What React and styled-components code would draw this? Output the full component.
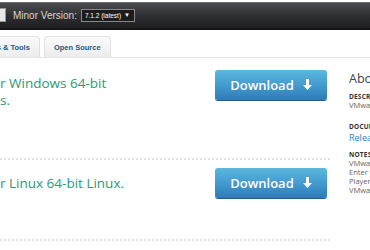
import styled, { createGlobalStyle } from "styled-components";

const GlobalStyle = createGlobalStyle`
	html, body {
		margin: 0;
		padding: 0;
		background: #fff;
		overflow: hidden;
		font-family: "Open Sans", "Liberation Sans", sans-serif;
	}
`;

const Page = styled.div`
	width: 370px;
	height: 250px;
	overflow: hidden;
	background: #fff;
`;

const TopBar = styled.div`
	margin-top: 2px;
	height: 28px;
	box-sizing: border-box;
	border-top: 1px solid #6a6a6a;
	border-bottom: 2px solid #161616;
	background: linear-gradient(#4b4c50, #2c2d30 55%, #1f1f21);
	display: flex;
	align-items: center;
	gap: 7px;
	padding-bottom: 1px;
`;

const StubSelect = styled.div`
	width: 5px;
	height: 12px;
	background: #e8e8e8;
	border: 1px solid #999;
	border-left: none;
`;

const Label = styled.span`
	font-family: "Liberation Sans", Arial, sans-serif;
	font-size: 10px;
	color: #d8d8d8;
`;

const Select = styled.div`
	margin-left: -3px;
	width: 54px;
	height: 13px;
	box-sizing: border-box;
	border: 1px solid #888;
	background: #1c1c1c;
	color: #fff;
	font-family: "Liberation Sans", Arial, sans-serif;
	font-size: 6.5px;
	display: flex;
	align-items: center;
	justify-content: space-between;
	padding: 0 4px 0 3px;
`;

const Caret = styled.span`
	font-size: 6px;
`;

const Tabs = styled.div`
	margin-top: 6px;
	height: 22px;
	box-sizing: border-box;
	border-bottom: 1px solid #e4e4e4;
	display: flex;
	gap: 4px;
	align-items: flex-end;
`;

const Tab = styled.div`
	height: 21px;
	box-sizing: border-box;
	margin-left: ${({ $offset }) => $offset || 0}px;
	padding: 0 ${({ $pad }) => $pad || 9}px;
	border: 1px solid #e0e0e0;
	border-bottom: none;
	border-radius: 4px 4px 0 0;
	background: linear-gradient(#fbfbfb, #ececec);
	color: #23577f;
	font-family: "Liberation Sans", Arial, sans-serif;
	font-weight: 700;
	font-size: 7.5px;
	white-space: nowrap;
	display: flex;
	align-items: center;
`;

const Body = styled.div`
	display: flex;
	gap: 19px;
`;

const MainCol = styled.div`
	width: 330px;
	flex-shrink: 0;
`;

const Row = styled.div`
	height: ${({ $h }) => $h}px;
	padding-top: ${({ $top }) => $top}px;
	box-sizing: border-box;
	border-bottom: 2px dotted #e3e3e3;
	display: flex;
	justify-content: space-between;
	align-items: flex-start;
`;

const Desc = styled.div`
	font-size: 13.5px;
	line-height: 17px;
	color: #2a9a78;
	padding-top: ${({ $top }) => $top || 0}px;
`;

const Button = styled.button`
	width: 112px;
	height: 30px;
	margin-right: 3px;
	border: none;
	border-radius: 3px;
	background: linear-gradient(#5ab8de, #3f95cb 60%, #2f7ab8);
	box-shadow: 0 1px 0 #1f5f96;
	color: #fff;
	font-family: "Open Sans", sans-serif;
	font-size: 13px;
	font-weight: 600;
	display: flex;
	align-items: center;
	justify-content: center;
	gap: 9px;
	padding: 0 0 1px;
`;

const Side = styled.div`
	width: 120px;
	flex-shrink: 0;
	padding-top: 12px;
	white-space: nowrap;
`;

const SideTitle = styled.div`
	font-size: 12.5px;
	color: #444;
	margin-bottom: 5px;
`;

const SideHead = styled.div`
	font-size: 6.5px;
	font-weight: 700;
	color: #333;
	letter-spacing: 0.2px;
	margin-top: ${({ $top }) => $top || 0}px;
`;

const SideText = styled.div`
	line-height: 8.7px;
	color: ${({ $link }) => ($link ? "#2f81bd" : "#666")};
	font-size: ${({ $link }) => ($link ? 9 : 7.5)}px;
	margin-top: ${({ $link }) => ($link ? 3 : 0)}px;
`;

const ArrowDown = () => (
	<svg width="9" height="11" viewBox="0 0 9 11">
		<path d="M3 0h3v6h3L4.5 11 0 6h3z" fill="#fff" />
	</svg>
);

const App = () => {
	return (
		<>
			<GlobalStyle />
			<Page>
				<TopBar>
					<StubSelect />
					<Label>Minor Version:</Label>
					<Select>
						<span>7.1.2 (latest)</span>
						<Caret>▼</Caret>
					</Select>
				</TopBar>
				<Tabs>
					<Tab $offset={-35} $pad={9}>Drivers &amp; Tools</Tab>
					<Tab>Open Source</Tab>
				</Tabs>
				<Body>
					<MainCol>
						<Row $h={102} $top={12}>
							<Desc $top={5}>
								r Windows 64-bit
								<br />
								s.
							</Desc>
							<Button>
								Download
								<ArrowDown />
							</Button>
						</Row>
						<Row $h={81} $top={8}>
							<Desc $top={7}>r Linux 64-bit Linux.</Desc>
							<Button>
								Download
								<ArrowDown />
							</Button>
						</Row>
					</MainCol>
					<Side>
						<SideTitle>About</SideTitle>
						<SideHead>DESCRIPTION</SideHead>
						<SideText>VMware Workstation</SideText>
						<SideHead $top={12}>DOCUMENTATION</SideHead>
						<SideText $link>Release Notes</SideText>
						<SideHead $top={8}>NOTES</SideHead>
						<SideText>VMware Workstation</SideText>
						<SideText>Enter your license</SideText>
						<SideText>Player is included</SideText>
						<SideText>VMware Workstation</SideText>
					</Side>
				</Body>
			</Page>
		</>
	);
};

export default App;
